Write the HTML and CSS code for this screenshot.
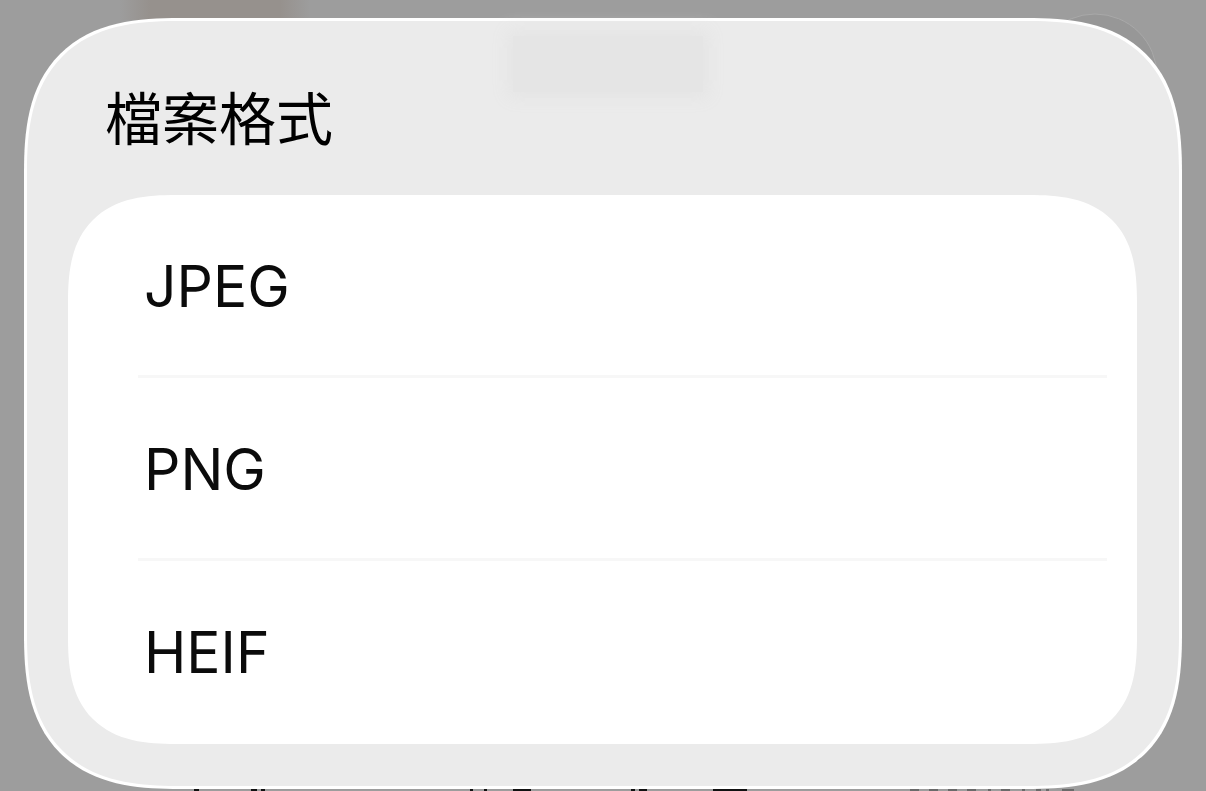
FILE: index.html
```html
<!DOCTYPE html>
<html lang="zh-Hant">
<head>
  <meta charset="UTF-8">
  <meta name="viewport" content="width=device-width, initial-scale=1.0">
  <title>檔案格式</title>
  <link rel="stylesheet" href="styles.css">
</head>
<body>
  <!-- dimmed page behind the sheet -->
  <svg class="backdrop" viewBox="0 0 1206 791" preserveAspectRatio="none" aria-hidden="true">
    <circle cx="1095" cy="76" r="62" fill="#979797" stroke="#a9a9a9" stroke-width="1"/>
    <path d="M194 790h5M251 790h6M261 790h4M470 790h3M484 790h3M513 790h18M631 790h4M639 790h8M713 790h34" stroke="#111" stroke-width="2"/>
    <path d="M910 790h9M929 790h9M948 790h9M967 790h9M988 790h3M1001 790h9M1022 790h3M1036 790h5M1046 790h3M1062 790h12" stroke="#6a6a6a" stroke-width="2"/>
    <path d="M1137 760l3-3" stroke="#333" stroke-width="2"/>
  </svg>

  <main class="sheet">
    <h1>檔案格式</h1>
    <ul class="options">
      <li><button type="button">JPEG</button></li>
      <li><button type="button">PNG</button></li>
      <li><button type="button">HEIF</button></li>
    </ul>
  </main>
</body>
</html>
```

FILE: styles.css
```css
:root{
  --dim:#9d9d9d;
  --sheet:#ebebeb;
  --line:#f7f7f7;
  --white:#fff;
  --text:#0b0b0b;
}
*{box-sizing:border-box}
body{
  margin:0;
  min-height:100vh;
  padding:18px 24px 2px;
  display:flex;
  overflow:hidden;
  background:
    linear-gradient(90deg,transparent 120px,#96918d 150px,#96918d 280px,transparent 310px) top/100% 20px no-repeat,
    var(--dim);
  font-family:Inter,"Noto Sans CJK TC",sans-serif;
  color:var(--text);
}
.backdrop{position:absolute;inset:0;width:100%;height:100%}
.sheet{
  position:relative;
  flex:1;
  padding:60px 42px 42px 41px;
  border:3px solid var(--white);
  border-radius:125px;
  background:var(--sheet);
}
/* page title showing faintly through the glass */
.sheet::before{
  content:"";
  position:absolute;
  top:15px;
  left:calc(50% - 90px);
  width:190px;
  height:56px;
  background:#e5e5e5;
  box-shadow:0 0 16px 6px #e5e5e5;
}
h1{
  margin:0 0 46px;
  padding-left:37px;
  font:400 57px/68px "Noto Sans CJK TC",sans-serif;
  color:#000;
}
.options{
  margin:0;
  padding:0;
  list-style:none;
  overflow:hidden;
  border-radius:92px;
  background:var(--white);
}
.options li{padding:0 30px 0 70px}
.options button{
  display:block;
  width:100%;
  height:183px;
  padding:3px 6px 0;
  border:0;
  border-bottom:3px solid var(--line);
  background:none;
  font:inherit;
  font-size:57px;
  line-height:70px;
  text-align:left;
  color:inherit;
  cursor:pointer;
}
.options li:last-child button{border-bottom-color:transparent}

/* smoother corners where the browser can draw them */
@supports (corner-shape:superellipse(1.4)){
  .sheet{border-radius:156px;corner-shape:superellipse(1.4)}
  .options{border-radius:108px;corner-shape:superellipse(1.4)}
}
```
